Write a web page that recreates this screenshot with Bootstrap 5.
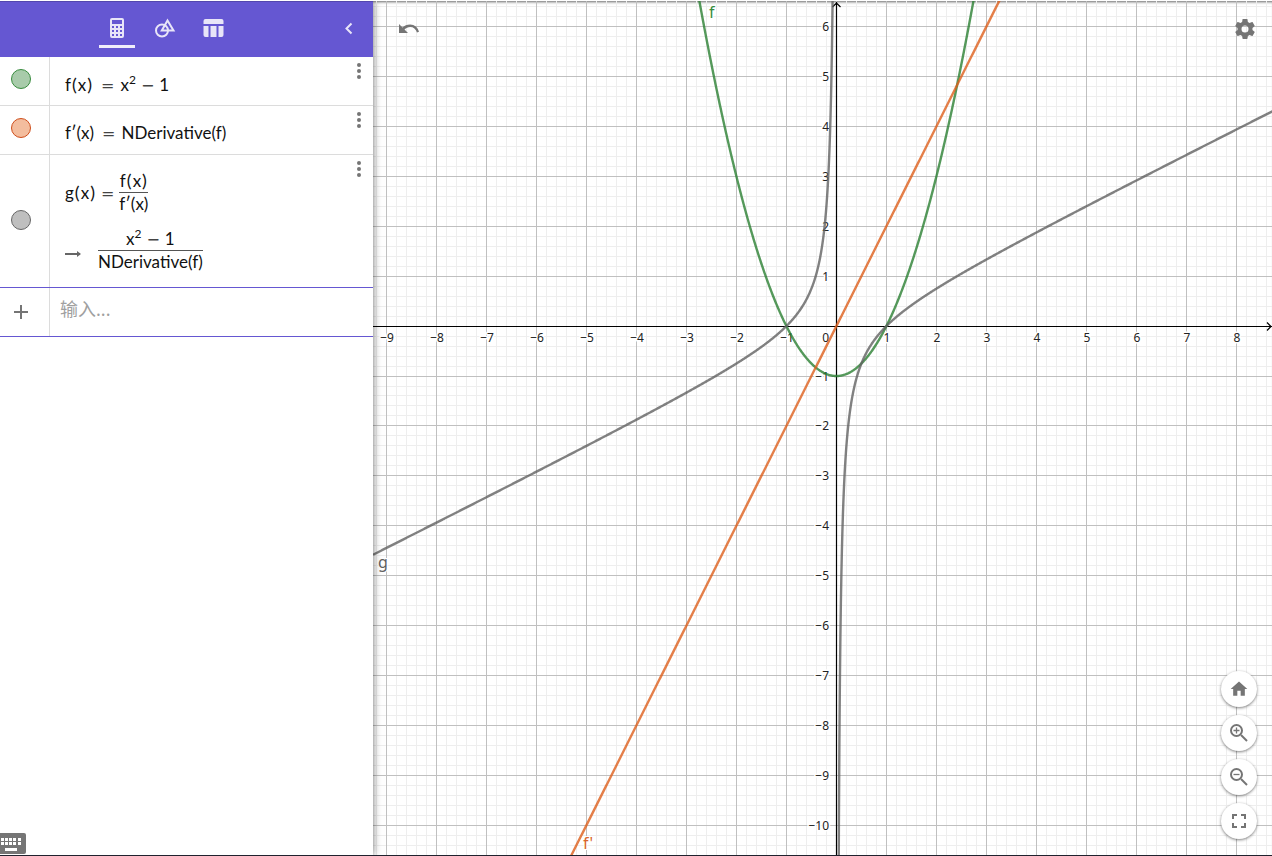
<!DOCTYPE html>
<html lang="zh-CN">
<head>
<meta charset="utf-8">
<meta name="viewport" content="width=device-width, initial-scale=1">
<title>GeoGebra</title>
<link href="https://cdn.jsdelivr.net/npm/bootstrap@5.3.0/dist/css/bootstrap.min.css" rel="stylesheet">
<style>
body { font-family: "Noto Sans", "Noto Sans CJK SC", sans-serif; }
.app { border-top: 1px solid #fff; border-bottom: 1px solid #20222e; }
.algebra { width: 373px; z-index: 2; box-shadow: 0 0 8px rgba(0,0,0,.55); }
.topbar { height: 56px; background: #6557d2; box-shadow: inset 0 1px 0 #5347ae; }
.tab-group { gap: 12px; margin-right: 43px; }
.icon-btn { padding: 0; border: 0; background: none; line-height: 0; color: #757575; }
.tab-btn { width: 36px; height: 36px; margin-top: 11px; padding-bottom: 1px; border-bottom: 3px solid transparent; color: #e8e5f8; }
.tab-btn.active { border-bottom-color: #f0eefb; }
.collapse-btn { position: absolute; right: 12px; top: 16px; color: #e8e5f8; }
.entry { min-height: 49px; border-bottom: 1px solid #dcdcdc; }
.entry.tall { min-height: 133px; border-color: #6557d2; }
.entry.fresh { border-color: #6557d2; }
.gutter { width: 50px; border-right: 1px solid #dcdcdc; padding-right: 7px; }
.marble { width: 20px; height: 20px; padding: 0; border-radius: 50%; border: 1px solid; }
.marble.green { background: #a8cbaa; border-color: #388c3e; margin-top: -5px; }
.marble.orange { background: #f3bd9e; border-color: #cf4e1b; margin-top: -5px; }
.marble.gray { background: #bfbfbf; border-color: #666; margin-top: -3px; }
.formula { font-family: Lato, sans-serif; font-size: 17px; line-height: 20px; color: #111; padding-left: 15px; }
.single { padding-top: 17px; }
.formula sup { font-size: 12px; line-height: 0; top: -7px; }
.paren { font-size: 18px; padding: 0 1px; }
.rel, .rel-tight { font-family: "DejaVu Sans", sans-serif; font-size: 16px; line-height: 0; color: #444; }
.rel { padding: 0 6px 0 8px; }
.rel-tight { padding: 0 5px; }
.fraction { display: inline-flex; flex-direction: column; text-align: center; }
.fraction > span:first-child { border-bottom: 1px solid #555; line-height: 23px; }
.fraction > span:last-child { line-height: 22px; }
.definition { padding-top: 14px; }
.result { padding-top: 12px; }
.arrow { width: 33px; margin-top: 8px; }
.more-btn { width: 20px; height: 20px; margin: 5px 4px 0 0; }
.entry-input { border: 0; outline: 0; background: none; font-size: 18px; padding: 0 10px 5px; color: #333; min-width: 0; }
.entry-input::placeholder { color: #a0a0a0; opacity: 1; }
.keyboard-btn { position: absolute; left: -2px; bottom: 1px; }
.graphics { background: #fff; box-shadow: inset 0 3px 3px -2px rgba(0,0,0,.6); }
.graphics > svg { position: absolute; inset: 0; }
.undo-btn { position: absolute; left: 25px; top: 21px; }
.settings-btn { position: absolute; right: 15px; top: 16px; }
.view-tools { position: absolute; right: 15px; bottom: 16px; gap: 8px; }
.round-btn { width: 36px; height: 36px; border-radius: 50%; background: #fff; box-shadow: 0 1px 3px rgba(0,0,0,.5); }
.tick { font-size: 12px; fill: #222; stroke: #fff; stroke-width: 3px; paint-order: stroke; stroke-linejoin: round; }
.curve-name { font-size: 16px; stroke: #fff; stroke-width: 2px; paint-order: stroke; }
</style>
<script src="https://cdn.jsdelivr.net/npm/bootstrap@5.3.0/dist/js/bootstrap.bundle.min.js"></script>
</head>
<body>
<div class="app d-flex vh-100 overflow-hidden">
  <aside class="algebra position-relative flex-shrink-0 bg-white">
    <nav class="topbar position-relative d-flex justify-content-center" aria-label="视图">
      <div class="tab-group d-flex">
        <button class="icon-btn tab-btn active" aria-label="代数">
          <svg width="24" height="24" viewBox="0 0 24 24"><path fill="currentColor" fill-rule="evenodd" d="M7 2h10a2 2 0 0 1 2 2v16a2 2 0 0 1-2 2H7a2 2 0 0 1-2-2V4a2 2 0 0 1 2-2zM7 4v4h10V4zM7 10v2h2v-2zM11 10v2h2v-2zM15 10v2h2v-2zM7 14v2h2v-2zM11 14v2h2v-2zM15 14v2h2v-2zM7 18v2h2v-2zM11 18v2h2v-2zM15 18v2h2v-2z"/></svg>
        </button>
        <button class="icon-btn tab-btn" aria-label="工具">
          <svg width="24" height="24" viewBox="0 0 24 24" fill="none" stroke="currentColor" stroke-width="2"><circle cx="9" cy="14.500" r="6"/><path d="M14.500 4.500 8.800 14.500H20.500Z"/></svg>
        </button>
        <button class="icon-btn tab-btn" aria-label="表格">
          <svg width="24" height="24" viewBox="0 0 24 24" fill="currentColor"><path d="M4.500 3h16a2 2 0 0 1 2 2v3h-20V5a2 2 0 0 1 2-2zM2.500 10h5v11h-3a2 2 0 0 1-2-2zM9.500 10h6v11h-6zM17.500 10h5v9a2 2 0 0 1-2 2h-3z"/></svg>
        </button>
      </div>
      <button class="icon-btn collapse-btn" aria-label="收起"><svg width="24" height="24" viewBox="0 0 24 24" fill="none" stroke="currentColor" stroke-width="2"><path d="m14.500 6.500-5 5 5 5"/></svg></button>
    </nav>

    <div class="entry d-flex">
      <div class="gutter d-flex align-items-center justify-content-center flex-shrink-0"><button class="marble green" aria-label="显示 f"></button></div>
      <div class="formula single flex-grow-1">f<span class="paren">(</span>x<span class="paren">)</span><span class="rel">=</span>x<sup>2</sup><span class="rel-tight">−</span>1</div>
      <button class="icon-btn more-btn" aria-label="更多"><svg width="20" height="20" fill="currentColor"><circle cx="10" cy="3" r="2"/><circle cx="10" cy="9" r="2"/><circle cx="10" cy="15" r="2"/></svg></button>
    </div>
    <div class="entry d-flex">
      <div class="gutter d-flex align-items-center justify-content-center flex-shrink-0"><button class="marble orange" aria-label="显示 f′"></button></div>
      <div class="formula single flex-grow-1">f′(x)<span class="rel">=</span>NDerivative(f)</div>
      <button class="icon-btn more-btn" aria-label="更多"><svg width="20" height="20" fill="currentColor"><circle cx="10" cy="3" r="2"/><circle cx="10" cy="9" r="2"/><circle cx="10" cy="15" r="2"/></svg></button>
    </div>
    <div class="entry tall d-flex">
      <div class="gutter d-flex align-items-center justify-content-center flex-shrink-0"><button class="marble gray" aria-label="显示 g"></button></div>
      <div class="formula flex-grow-1">
        <div class="definition d-flex align-items-center"><span>g<span class="paren">(</span>x<span class="paren">)</span><span class="rel-tight">=</span></span><span class="fraction"><span>f<span class="paren">(</span>x<span class="paren">)</span></span><span>f′(x)</span></span></div>
        <div class="result d-flex align-items-center"><svg class="arrow" height="10" viewBox="0 0 33 10"><path d="M0 5h15" stroke="#666" stroke-width="2"/><path d="m12 2 4 3-4 3z" fill="#666"/></svg><span class="fraction"><span>x<sup>2</sup><span class="rel-tight">−</span>1</span><span>NDerivative(f)</span></span></div>
      </div>
      <button class="icon-btn more-btn" aria-label="更多"><svg width="20" height="20" fill="currentColor"><circle cx="10" cy="3" r="2"/><circle cx="10" cy="9" r="2"/><circle cx="10" cy="15" r="2"/></svg></button>
    </div>
    <div class="entry fresh d-flex">
      <div class="gutter d-flex align-items-center justify-content-center flex-shrink-0"><button class="icon-btn" aria-label="添加"><svg width="16" height="16" fill="none" stroke="currentColor" stroke-width="2"><path d="M1 8h14M8 1v14"/></svg></button></div>
      <input class="entry-input flex-grow-1" type="text" placeholder="输入..." aria-label="输入">
    </div>

    <button class="icon-btn keyboard-btn" aria-label="键盘">
      <svg width="28" height="21" viewBox="0 0 28 21"><rect width="28" height="21" rx="2" fill="#757575"/><path fill="#fff" d="M3 5h3v3H3zM7 5h3v3H7zM11 5h3v3h-3zM15 5h3v3h-3zM20 5h3v3h-3zM3 9h3v3H3zM7 9h3v3H7zM11 9h3v3h-3zM15 9h3v3h-3zM20 9h3v3h-3zM7 15h12v3H7z"/></svg>
    </button>
  </aside>

  <main class="graphics position-relative flex-grow-1 overflow-hidden">
    <svg id="plot" width="100%" height="100%" role="img" aria-label="函数图像"></svg>
    <button class="icon-btn undo-btn" aria-label="撤销"><svg width="22" height="14" viewBox="0 0 22 14"><path fill="currentColor" d="M1 2v9h9L6.500 7.500C8 6 10 5 12.200 5c3.200 0 5.700 2 6.800 5.500l2-.8C19.800 5.500 16.500 2.500 12.200 2.500 9 2.500 6.500 3.800 4.500 5.500z"/></svg></button>
    <button class="icon-btn settings-btn" aria-label="设置"><svg width="24" height="24" viewBox="0 0 24 24"><path fill="currentColor" d="M19.430 12.980c.040-.320.070-.640.070-.980s-.030-.660-.070-.980l2.110-1.650c.190-.150.240-.420.120-.640l-2-3.460c-.120-.220-.390-.300-.610-.220l-2.490 1c-.520-.400-1.080-.730-1.690-.980l-.380-2.650C14.460 2.180 14.250 2 14 2h-4c-.250 0-.460.180-.490.420l-.380 2.650c-.610.250-1.170.590-1.690.980l-2.490-1c-.230-.090-.490 0-.610.220l-2 3.460c-.130.220-.070.490.120.640l2.110 1.650c-.040.320-.070.650-.070.980s.030.660.070.980l-2.110 1.650c-.190.150-.240.420-.120.640l2 3.460c.120.220.390.300.610.220l2.490-1c.520.400 1.080.730 1.690.980l.380 2.650c.030.240.240.420.490.420h4c.250 0 .460-.180.490-.420l.380-2.650c.610-.250 1.170-.590 1.690-.980l2.490 1c.230.090.490 0 .610-.220l2-3.460c.120-.220.070-.490-.120-.640zM12 15.500a3.500 3.500 0 1 1 0-7 3.500 3.500 0 0 1 0 7z"/></svg></button>
    <div class="view-tools d-flex flex-column">
      <button class="icon-btn round-btn" aria-label="主视图"><svg width="20" height="20" viewBox="0 0 24 24" fill="currentColor"><path d="M10 20v-6h4v6h5v-8h3L12 3 2 12h3v8z"/></svg></button>
      <button class="icon-btn round-btn" aria-label="放大"><svg width="24" height="24" viewBox="0 0 24 24" fill="none" stroke="currentColor" stroke-width="2"><circle cx="9.500" cy="9.500" r="5.500"/><path d="m14 14 6 6"/><path stroke-width="1.300" d="M6.500 9.500h6M9.500 6.500v6"/></svg></button>
      <button class="icon-btn round-btn" aria-label="缩小"><svg width="24" height="24" viewBox="0 0 24 24" fill="none" stroke="currentColor" stroke-width="2"><circle cx="9.500" cy="9.500" r="5.500"/><path d="m14 14 6 6"/><path stroke-width="1.300" d="M6.500 9.500h6"/></svg></button>
      <button class="icon-btn round-btn" aria-label="全屏"><svg width="24" height="24" viewBox="0 0 24 24" fill="none" stroke="currentColor" stroke-width="2"><path d="M6 10V6h4M14 6h4v4M18 14v4h-4M10 18H6v-4"/></svg></button>
    </div>
  </main>
</div>
<script>
const svg = document.getElementById('plot');
const ux = 50, uy = 49.92, ox = 463.4, oy = 325.1;
const snap = v => Math.floor(v) + 0.5;
const px = x => ox + x * ux, py = y => oy - y * uy;

function curve(fn, from, to, color) {
  let d = '';
  for (let x = from; x <= to; x += 0.01) {
    const y = fn(x);
    if (Math.abs(y) < 40) d += (d ? 'L' : 'M') + px(x).toFixed(2) + ' ' + py(y).toFixed(2);
  }
  return `<path d="${d}" fill="none" stroke="${color}" stroke-width="2.4" stroke-opacity=".8"/>`;
}

function draw() {
  const w = svg.clientWidth, h = svg.clientHeight;
  const x0 = -ox / ux, x1 = (w - ox) / ux, y0 = (oy - h) / uy, y1 = oy / uy;
  let minor = '', major = '', ticks = '';
  for (let i = Math.ceil(x0 * 5); i <= x1 * 5; i++) {
    const line = `M${snap(px(i / 5))} 0V${h}`;
    if (i % 5) minor += line; else major += line;
  }
  for (let i = Math.ceil(y0 * 5); i <= y1 * 5; i++) {
    const line = `M0 ${snap(py(i / 5))}H${w}`;
    if (i % 5) minor += line; else major += line;
  }
  const label = n => String(n).replace('-', '−');
  for (let n = Math.ceil(x0); n <= x1; n++)
    if (n) ticks += `<text class="tick" text-anchor="middle" x="${Math.floor(px(n)) + 1}" y="${Math.floor(oy) + 16}">${label(n)}</text>`;
  for (let n = Math.ceil(y0); n <= y1; n++)
    ticks += `<text class="tick" text-anchor="end" x="${Math.floor(ox) - 7}" y="${Math.floor(py(n)) + (n ? 5 : 16)}">${label(n)}</text>`;
  const ax = snap(ox), ay = snap(oy), g = x => (x * x - 1) / (2 * x);
  svg.innerHTML =
    `<path d="${minor}" stroke="#eeeeee"/><path d="${major}" stroke="#c0c0c0"/>` + ticks +
    `<path d="M${ax} ${h}V1M${ax - 4} 6L${ax} 2l4 4M0 ${ay}H${w}M${w - 5} ${ay - 4}l4 4-4 4" fill="none" stroke="#000" stroke-width="1.200"/>` +
    curve(x => x * x - 1, x0, x1, '#2a7f32') + curve(x => 2 * x, x0, x1, '#dd5f1c') +
    curve(g, x0, -0.01, '#616161') + curve(g, 0.01, x1 + 0.02, '#616161') +
    `<text class="curve-name" x="336" y="17" fill="#388c3e">f</text>` +
    `<text class="curve-name" x="5" y="567" fill="#616161">g</text>` +
    `<text class="curve-name" x="210" y="848" fill="#d9652b">f'</text>`;
}
draw();
addEventListener('resize', draw);
</script>
</body>
</html>
